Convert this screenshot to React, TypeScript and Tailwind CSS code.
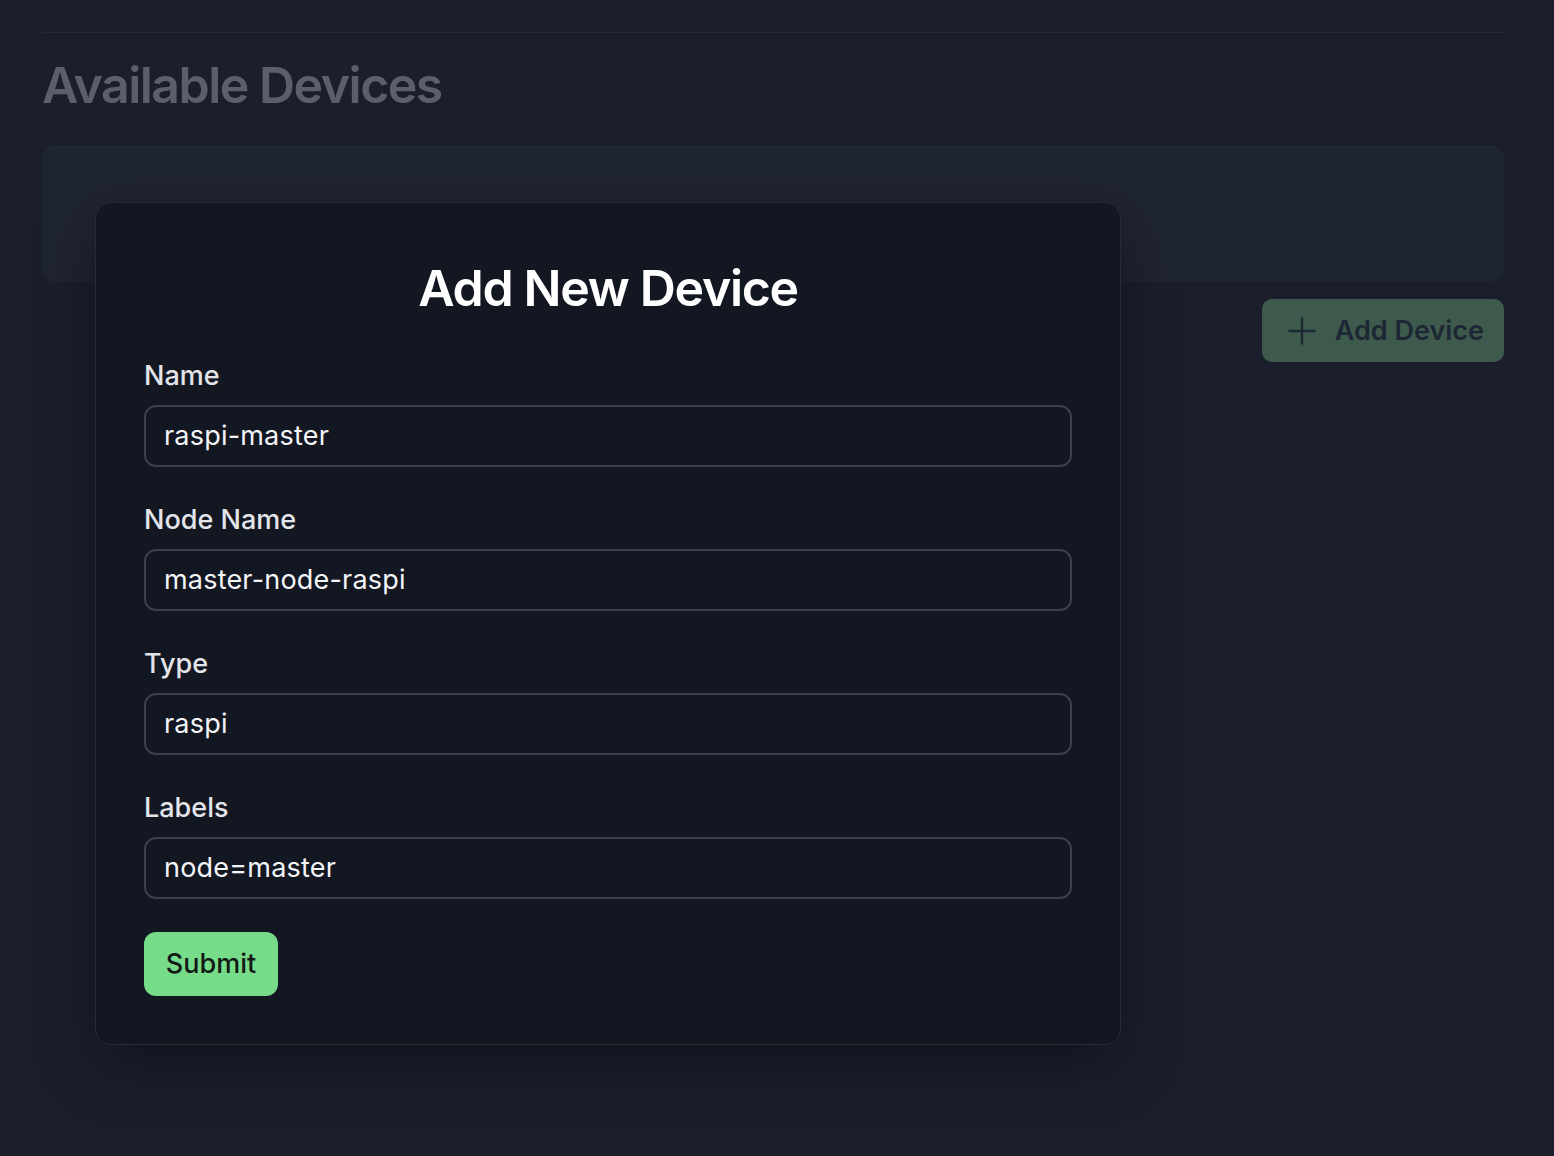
import React from 'react';

const fields = [
  { label: 'Name', value: 'raspi-master' },
  { label: 'Node Name', value: 'master-node-raspi' },
  { label: 'Type', value: 'raspi' },
  { label: 'Labels', value: 'node=master' },
];

function PlusIcon() {
  return (
    <svg width="28" height="28" viewBox="0 0 28 28" fill="none" stroke="currentColor" strokeWidth="2.4" strokeLinecap="round">
      <line x1="14" y1="1.5" x2="14" y2="26.5" />
      <line x1="1.5" y1="14" x2="26.5" y2="14" />
    </svg>
  );
}

export default function App() {
  return (
    <div className="relative min-h-[1156px] bg-[#1b1f2c] font-['Inter','Noto_Sans',sans-serif]">
      <div className="pl-[42px] pr-[50px] pt-[32px] w-[1554px] box-border">
        <div className="border-t border-[#242937]" />
        <h1 className="mt-[27px] text-[50px] leading-none font-semibold text-[#5a5f6b] tracking-[-1.5px]">
          Available Devices
        </h1>
        <div className="mt-[36px] h-[136px] rounded-[14px] bg-[#1f2431] border-t border-[#272c39]" />
        <div className="mt-[17px] flex justify-end">
          <button className="h-[63px] flex items-center gap-[19px] pl-[26px] pr-[20px] rounded-[10px] bg-[#3d5a4c] text-[#1e2734]">
            <PlusIcon />
            <span className="text-[27px] font-semibold leading-none">Add Device</span>
          </button>
        </div>
      </div>

      {/* modal */}
      <div className="absolute left-[95px] top-[202px] w-[1026px] rounded-[16px] border border-[#262b38] bg-[#131722] px-[48px] pt-[60px] pb-[48px] shadow-[0_20px_60px_rgba(0,0,0,0.35)]">
        <h2 className="text-center text-[50px] leading-none font-semibold text-white tracking-[-1.3px]">
          Add New Device
        </h2>
        <div className="mt-[45px] flex flex-col gap-[35px]">
          {fields.map((f) => (
            <div key={f.label} className="flex flex-col gap-[11px]">
              <label className="text-[27px] leading-[36px] font-medium text-[#e3e5ea]">{f.label}</label>
              <div className="h-[62px] flex items-center rounded-[12px] border-2 border-[#3b404d] pl-[18px] text-[27px] tracking-[0.2px] text-[#f4f5f7]">
                {f.value}
              </div>
            </div>
          ))}
        </div>
        <button className="mt-[33px] h-[64px] w-[134px] rounded-[12px] bg-[#77dc89] text-[27px] font-medium text-[#121a17]">
          Submit
        </button>
      </div>
    </div>
  );
}
